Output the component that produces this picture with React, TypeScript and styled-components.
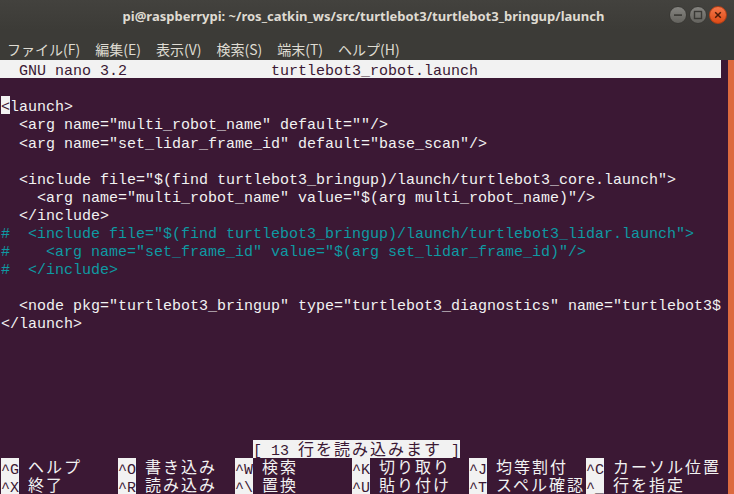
import styled, { createGlobalStyle } from 'styled-components';

type Tone = 'text' | 'cyan';

interface Part {
	t: string;
	inv?: boolean;
	tone?: Tone;
}

const BG = '#3b1834';
const FG = '#f2f2f2';
const CYAN = '#0e9aa3';
const ROW_H = 18.08;

const GlobalStyle = createGlobalStyle`
	html, body {
		margin: 0;
		padding: 0;
		background: ${BG};
	}
	body {
		width: 734px;
		height: 494px;
		overflow: hidden;
	}
`;

const Window = styled.div`
	width: 734px;
	height: 494px;
	display: flex;
	flex-direction: column;
	background: #3c3b37;
	overflow: hidden;
`;

const TitleBar = styled.div`
	height: 30px;
	flex: none;
	display: grid;
	grid-template-columns: 1fr auto 1fr;
	align-items: center;
	padding: 0 7px 0 0;
	background: linear-gradient(#43423e, #3c3b37);
`;

const Title = styled.div`
	grid-column: 2;
	color: #dfdbd2;
	font-family: 'Noto Sans', 'Liberation Sans', sans-serif;
	font-weight: bold;
	font-size: 13px;
	padding-top: 1px;
	white-space: nowrap;
`;

const Controls = styled.div`
	grid-column: 3;
	justify-self: end;
	display: flex;
	gap: 2px;
`;

const Circle = styled.div<{ $close?: boolean }>`
	width: 18px;
	height: 18px;
	border-radius: 50%;
	box-sizing: border-box;
	border: 1px solid ${({ $close }) => ($close ? '#b23e15' : '#3a3935')};
	background: ${({ $close }) =>
		$close
			? 'linear-gradient(#f4774a, #de4b16)'
			: 'linear-gradient(#858480, #64635e)'};
	display: flex;
	align-items: center;
	justify-content: center;
`;

const MenuBar = styled.div`
	height: 30px;
	flex: none;
	display: flex;
	gap: 15px;
	padding: 9px 0 0 7px;
	box-sizing: border-box;
	color: #dfdbd2;
	font-family: 'Noto Sans CJK JP', sans-serif;
	font-size: 14px;
	line-height: 20px;
`;

const Body = styled.div`
	flex: 1;
	display: flex;
	min-height: 0;
`;

const Terminal = styled.div`
	flex: 1;
	background: ${BG};
	display: flex;
	flex-direction: column;
`;

const Strip = styled.div`
	width: 6px;
	flex: none;
	background: #dc6a3f;
`;

const Row = styled.div<{ $inv?: boolean }>`
	height: ${ROW_H}px;
	width: 721px;
	flex: none;
	display: flex;
	padding-left: 1px;
	box-sizing: border-box;
	background: ${({ $inv }) => ($inv ? FG : 'transparent')};
`;

const Seg = styled.span<{ $inv?: boolean; $tone?: Tone }>`
	display: block;
	height: 100%;
	box-sizing: border-box;
	padding-top: 3.2px;
	line-height: 17px;
	font-family: 'Liberation Mono', monospace;
	font-size: 15px;
	white-space: pre;
	color: ${({ $inv, $tone }) => ($inv ? BG : $tone === 'cyan' ? CYAN : FG)};
	background: ${({ $inv }) => ($inv ? FG : 'transparent')};
`;

const Wide = styled(Seg)`
	font-family: 'Noto Sans CJK JP', sans-serif;
	font-size: 16px;
	letter-spacing: 2px;
	padding-top: 0;
	line-height: 16px;
`;

const Shortcuts = styled.div`
	height: ${ROW_H}px;
	flex: none;
	display: grid;
	grid-template-columns: repeat(6, 117px);
	padding-left: 1px;
`;

const Slot = styled.div`
	display: flex;
	gap: 9px;
	height: 100%;
`;

const Key = styled(Seg)`
	width: 18px;
	flex: none;
	padding-top: 4px;
`;

const WIDE = /([\u3000-\u30ff\u4e00-\u9fff\uff00-\uffef]+)/;

const Cells = ({ t, inv, tone }: Part) => (
	<>
		{t
			.split(WIDE)
			.filter(Boolean)
			.map((run, i) =>
				WIDE.test(run) ? (
					<Wide key={i} $inv={inv} $tone={tone}>
						{run}
					</Wide>
				) : (
					<Seg key={i} $inv={inv} $tone={tone}>
						{run}
					</Seg>
				)
			)}
	</>
);

const c = (t: string): Part[] => [{ t, tone: 'cyan' }];
const p = (t: string): Part[] => [{ t }];

const lines: Part[][] = [
	[],
	[{ t: '<', inv: true }, { t: 'launch>' }],
	p('  <arg name="multi_robot_name" default=""/>'),
	p('  <arg name="set_lidar_frame_id" default="base_scan"/>'),
	[],
	p('  <include file="$(find turtlebot3_bringup)/launch/turtlebot3_core.launch">'),
	p('    <arg name="multi_robot_name" value="$(arg multi_robot_name)"/>'),
	p('  </include>'),
	c('#  <include file="$(find turtlebot3_bringup)/launch/turtlebot3_lidar.launch">'),
	c('#    <arg name="set_frame_id" value="$(arg set_lidar_frame_id)"/>'),
	c('#  </include>'),
	[],
	p('  <node pkg="turtlebot3_bringup" type="turtlebot3_diagnostics" name="turtlebot3$'),
	p('</launch>'),
	[],
	[],
	[],
	[],
	[],
	[],
	[{ t: ' '.repeat(28) }, { t: '[ 13 行を読み込みます ]', inv: true }],
];

const shortcuts: [string, string][][] = [
	[
		['^G', 'ヘルプ'],
		['^O', '書き込み'],
		['^W', '検索'],
		['^K', '切り取り'],
		['^J', '均等割付'],
		['^C', 'カーソル位置'],
	],
	[
		['^X', '終了'],
		['^R', '読み込み'],
		['^\\', '置換'],
		['^U', '貼り付け'],
		['^T', 'スペル確認'],
		['^_', '行を指定'],
	],
];

const menu = ['ファイル(F)', '編集(E)', '表示(V)', '検索(S)', '端末(T)', 'ヘルプ(H)'];

const App = () => (
	<>
		<GlobalStyle />
		<Window>
			<TitleBar>
				<Title>pi@raspberrypi: ~/ros_catkin_ws/src/turtlebot3/turtlebot3_bringup/launch</Title>
				<Controls>
					<Circle>
						<svg width="10" height="10" viewBox="0 0 10 10">
							<rect x="1" y="4.3" width="8" height="1.6" fill="#3a3935" />
						</svg>
					</Circle>
					<Circle>
						<svg width="10" height="10" viewBox="0 0 10 10">
							<rect x="1.5" y="1.5" width="7" height="7" fill="none" stroke="#3a3935" strokeWidth="1.4" />
						</svg>
					</Circle>
					<Circle $close>
						<svg width="10" height="10" viewBox="0 0 10 10">
							<path d="M2.2 2.2 L7.8 7.8 M7.8 2.2 L2.2 7.8" stroke="#4a1a08" strokeWidth="1.5" />
						</svg>
					</Circle>
				</Controls>
			</TitleBar>
			<MenuBar>
				{menu.map((m) => (
					<span key={m}>{m}</span>
				))}
			</MenuBar>
			<Body>
				<Terminal>
					<Row $inv>
						<Seg $inv>{'  GNU nano 3.2                '}</Seg>
						<Seg $inv>turtlebot3_robot.launch</Seg>
					</Row>
					{lines.map((parts, i) => (
						<Row key={i}>
							{parts.map((part, j) => (
								<Cells key={j} {...part} />
							))}
						</Row>
					))}
					{shortcuts.map((row, i) => (
						<Shortcuts key={i}>
							{row.map(([k, label]) => (
								<Slot key={k}>
									<Key $inv>{k}</Key>
									<Cells t={label} />
								</Slot>
							))}
						</Shortcuts>
					))}
				</Terminal>
				<Strip />
			</Body>
		</Window>
	</>
);

export default App;
